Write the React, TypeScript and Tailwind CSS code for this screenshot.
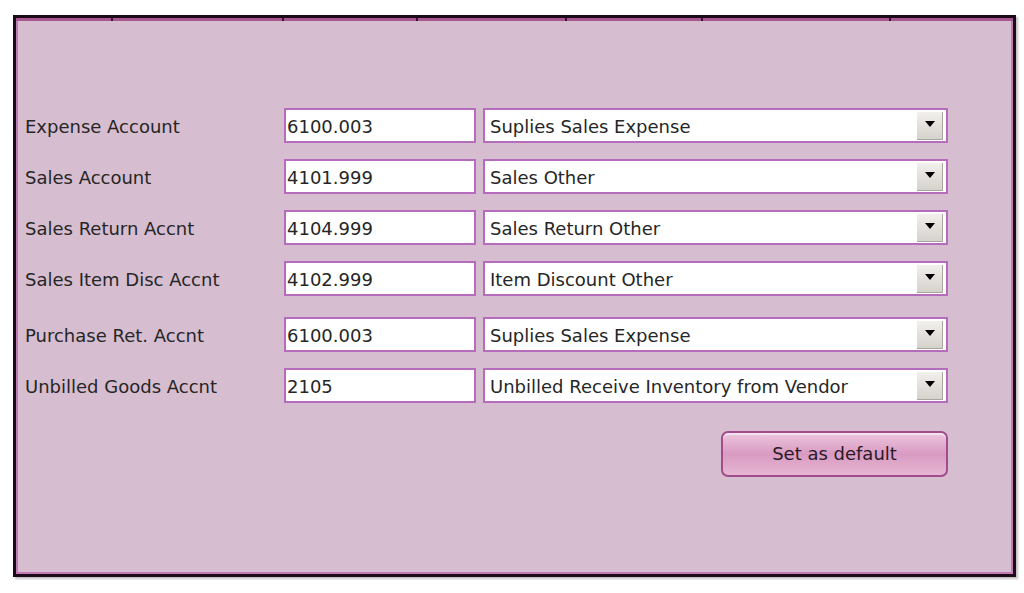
import React from "react";

const ROWS = [
  { label: "Expense Account", code: "6100.003", name: "Suplies Sales Expense", extra: "" },
  { label: "Sales Account", code: "4101.999", name: "Sales Other", extra: "" },
  { label: "Sales Return Accnt", code: "4104.999", name: "Sales Return Other", extra: "" },
  { label: "Sales Item Disc Accnt", code: "4102.999", name: "Item Discount Other", extra: "" },
  { label: "Purchase Ret. Accnt", code: "6100.003", name: "Suplies Sales Expense", extra: "mt-[5px]" },
  { label: "Unbilled Goods Accnt", code: "2105", name: "Unbilled Receive Inventory from Vendor", extra: "" },
];

// leftover tab separators from the strip above the panel
const TICKS = ["left-[95px]", "left-[266px]", "left-[400px]", "left-[549px]", "left-[685px]", "left-[873px]"];

function Combo({ value }: { value: string }) {
  return (
    <div className="flex h-[35px] w-[465px] items-center border-2 border-[#b66cbd] bg-white pl-[5px] pr-[3px]">
      <span className="flex-1 truncate pt-[2px]">{value}</span>
      <span className="flex h-[28px] w-[26px] items-center justify-center border-b border-r border-[#a8a49e] bg-gradient-to-b from-[#f2f0ec] to-[#d6d2cc]">
        <span className="mb-[2px] h-0 w-0 border-x-[5px] border-t-[6px] border-x-transparent border-t-black" />
      </span>
    </div>
  );
}

export default function App() {
  return (
    <div className="h-[593px] w-[1024px] bg-white pl-[13px] pt-[15px] text-[18px] text-[#262626] [font-family:'DejaVu_Sans',Verdana,sans-serif]">
      <div className="relative h-[562px] w-[1003px] border-[3px] border-[#1d0a19] bg-[#d6bdd0] shadow-[inset_0_3px_0_#a7578f,inset_0_-2px_0_#c07ab4,inset_2px_0_0_#c07ab4,inset_-2px_0_0_#c07ab4,2px_2px_2px_rgba(0,0,0,0.25)]">
        {TICKS.map((t) => (
          <span key={t} className={`absolute top-0 h-[3px] w-[2px] bg-[#3a1433] ${t}`} />
        ))}
        <div className="flex flex-col gap-[16px] pl-[9px] pt-[90px]">
          {ROWS.map((r, i) => (
            <div key={i} className={`flex h-[35px] items-center ${r.extra}`}>
              <div className="w-[259px] pt-[1px]">{r.label}</div>
              <div className="flex h-[35px] w-[192px] items-center border-2 border-[#b66cbd] bg-white pl-[1px] pt-[1px]">{r.code}</div>
              <div className="ml-[7px]">
                <Combo value={r.name} />
              </div>
            </div>
          ))}
        </div>
        <div className="flex w-[932px] justify-end pt-[28px]">
          <button className="h-[46px] w-[227px] rounded-[7px] border-2 border-[#a24d8b] bg-gradient-to-b from-[#ecc6dd] via-[#d99ac2] to-[#e6b6d3] pb-[2px] text-[18px] text-[#2a1a26] shadow-[inset_0_2px_0_rgba(255,255,255,0.5)]">
            Set as default
          </button>
        </div>
      </div>
    </div>
  );
}
